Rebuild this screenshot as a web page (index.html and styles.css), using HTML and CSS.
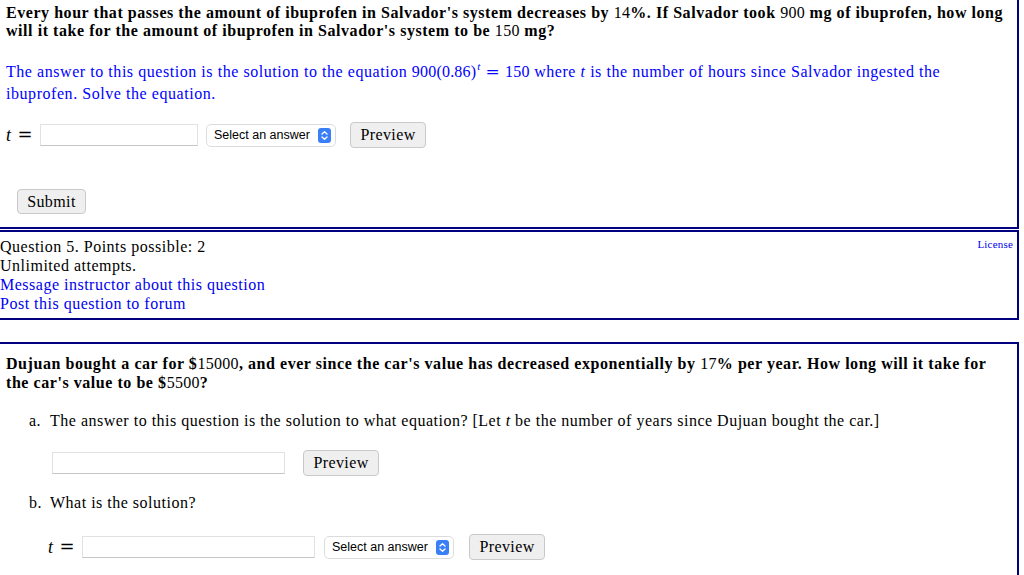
FILE: index.html
```html
<!DOCTYPE html>
<html lang="en">
<head>
    <meta charset="UTF-8">
    <title>Question 4</title>
    <link rel="stylesheet" href="styles.css">
</head>
<body>
    <div class="question first">
        <p class="qtext">Every hour that passes the amount of ibuprofen in Salvador's system decreases by <span class="num">14</span>%. If Salvador took <span class="num">900</span> mg of ibuprofen, how long will it take for the amount of ibuprofen in Salvador's system to be <span class="num">150</span> mg?</p>
        <p class="hint">The answer to this question is the solution to the equation <span class="math">900(0.86)<sup><i>t</i></sup><span class="eq">=</span>150</span> where <i>t</i> is the number of hours since Salvador ingested the ibuprofen. Solve the equation.</p>

        <div class="answer-row">
            <span class="math-label"><i>t</i><span class="eq">=</span></span>
            <input type="text" class="answer short">
            <div class="select-wrap">
                <select class="units">
                    <option>Select an answer</option>
                </select>
                <svg class="chevron" width="13" height="15" viewBox="0 0 13 15">
                    <rect width="13" height="15" rx="3" fill="#3a7ff6"/>
                    <path d="M4 6 L6.5 3.8 L9 6 M4 9 L6.5 11.2 L9 9" stroke="#fff" stroke-width="1.4" fill="none" stroke-linecap="round" stroke-linejoin="round"/>
                </svg>
            </div>
            <button type="button" class="btn preview">Preview</button>
        </div>

        <button type="button" class="btn submit">Submit</button>
    </div>

    <div class="question-info">
        <a href="#" class="license">License</a>
        Question 5. Points possible: 2<br>
        Unlimited attempts.<br>
        <a href="#">Message instructor about this question</a><br>
        <a href="#">Post this question to forum</a>
    </div>

    <div class="question third">
        <p class="qtext bold19">Dujuan bought a car for $<span class="num">15000</span>, and ever since the car's value has decreased exponentially by <span class="num">17</span>% per year. How long will it take for the car's value to be $<span class="num">5500</span>?</p>

        <ol class="parts">
            <li>
                <span class="marker">a.</span>
                <div class="part-body">
                    The answer to this question is the solution to what equation? [Let <i>t</i> be the number of years since Dujuan bought the car.]
                    <div class="answer-row part-a">
                        <input type="text" class="answer long">
                        <button type="button" class="btn preview">Preview</button>
                    </div>
                </div>
            </li>
            <li class="part-b-item">
                <span class="marker">b.</span>
                <div class="part-body">
                    What is the solution?
                    <div class="answer-row part-b">
                        <span class="math-label"><i>t</i><span class="eq">=</span></span>
                        <input type="text" class="answer long">
                        <div class="select-wrap">
                            <select class="units">
                                <option>Select an answer</option>
                            </select>
                            <svg class="chevron" width="13" height="15" viewBox="0 0 13 15">
                                <rect width="13" height="15" rx="3" fill="#3a7ff6"/>
                                <path d="M4 6 L6.5 3.8 L9 6 M4 9 L6.5 11.2 L9 9" stroke="#fff" stroke-width="1.4" fill="none" stroke-linecap="round" stroke-linejoin="round"/>
                            </svg>
                        </div>
                        <button type="button" class="btn preview">Preview</button>
                    </div>
                </div>
            </li>
        </ol>
    </div>
</body>
</html>
```

FILE: styles.css
```css
body {
    margin: 0;
    font-family: "Liberation Serif", "Times New Roman", serif;
    font-size: 16px;
    letter-spacing: 0.5px;
    color: #000;
    background: #fff;
}

a {
    color: #0000ee;
    text-decoration: none;
}

/* question boxes */
.question {
    margin-right: 5px;
    border-right: 2px solid #000080;
    border-bottom: 2px solid #000080;
    padding: 4px 0 13px 6px;
}

.qtext {
    margin: 0;
    padding-right: 10px;
    font-weight: bold;
    line-height: 18px;
    letter-spacing: 0.55px;
}

.qtext .num {
    font-weight: normal;
    letter-spacing: 0.3px;
}

.bold19 {
    line-height: 19px;
}

.hint {
    margin: 20px 0 0;
    padding-right: 12px;
    color: #0000ff;
    line-height: 22px;
    letter-spacing: 0.55px;
}

.hint .math {
    white-space: nowrap;
    letter-spacing: 0.2px;
}

.hint sup {
    font-size: 11px;
    line-height: 0;
    vertical-align: 7px;
    margin-left: 1px;
}

.eq {
    display: inline-block;
    margin: 0 5px;
    font-size: 17px;
    font-family: "DejaVu Serif", serif;
}

/* answer row */
.answer-row {
    display: flex;
    align-items: center;
    height: 26px;
    margin-top: 17px;
}

.math-label {
    width: 26px;
    margin-right: 8px;
    white-space: nowrap;
    font-size: 18px;
}

.math-label .eq {
    margin: 0 0 0 6px;
    font-size: 18px;
}

.answer {
    box-sizing: border-box;
    height: 22px;
    border: 1px solid #e2e2e2;
    border-bottom-color: #c6c6c6;
    border-radius: 0;
    background: #fff;
    margin: 0 8px 0 0;
    padding: 0 4px;
}

.answer.short {
    width: 158px;
}

.answer.long {
    width: 233px;
    margin-right: 9px;
}

.select-wrap {
    position: relative;
    margin-right: 14px;
}

.units {
    appearance: none;
    -webkit-appearance: none;
    box-sizing: border-box;
    width: 130px;
    height: 23px;
    padding: 0 0 0 7px;
    border: 1px solid #dcdcdc;
    border-radius: 5px;
    background: #fff;
    font-family: "Liberation Sans", Arial, sans-serif;
    font-size: 12.5px;
    letter-spacing: 0;
    color: #000;
}

.chevron {
    position: absolute;
    right: 5px;
    top: 4px;
    pointer-events: none;
}

/* buttons */
.btn {
    box-sizing: border-box;
    font-family: "Liberation Serif", "Times New Roman", serif;
    font-size: 16px;
    letter-spacing: 0.4px;
    color: #000;
    background: #efefef;
    border: 1px solid #c9c9c9;
    border-radius: 4px;
    padding: 0 6px;
    cursor: pointer;
}

.preview {
    width: 76px;
    height: 26px;
}

.submit {
    display: block;
    width: 69px;
    height: 25px;
    margin: 41px 0 0 11px;
}

/* question info */
.question-info {
    margin: 1px 5px 0 0;
    border-top: 2px solid #000080;
    border-right: 2px solid #000080;
    border-bottom: 2px solid #000080;
    padding: 5px 0;
    line-height: 19px;
}

.license {
    float: right;
    font-size: 11px;
    line-height: 12px;
    letter-spacing: 0.2px;
    margin: 1px 4px 0 0;
}

/* second question */
.question.third {
    margin-top: 22px;
    border-top: 2px solid #000080;
    padding: 10px 0 40px 6px;
}

.parts {
    list-style: none;
    margin: 19px 0 0;
    padding-left: 23px;
    line-height: 19px;
}

.parts li {
    display: grid;
    grid-template-columns: 21px 1fr;
}

.part-a {
    margin: 20px 0 0 2px;
}

.part-a .answer {
    margin-right: 18px;
}

.part-b-item {
    margin-top: 17px;
}

.part-b {
    margin: 22px 0 0 -2px;
}

.part-b .select-wrap {
    margin-right: 15px;
}
```
